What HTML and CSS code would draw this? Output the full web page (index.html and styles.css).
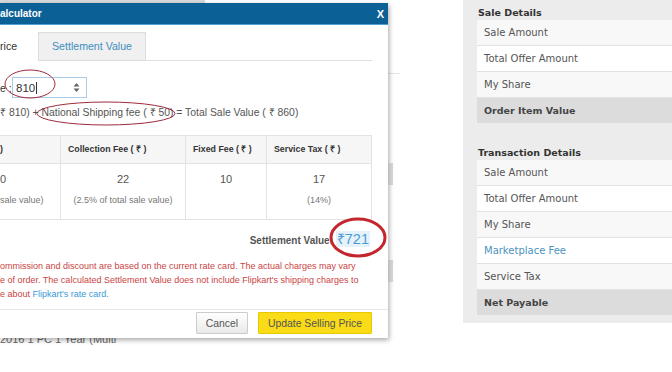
FILE: index.html
```html
<!DOCTYPE html>
<html>
<head>
    <meta charset="UTF-8">
    <title>Settlement Value Calculator</title>
    <link rel="stylesheet" href="styles.css">
</head>
<body>
    <div class="screen">
        <div class="page">
            <!-- the listing page behind the popup -->
            <div class="under-top"></div>
            <div class="under-line"></div>
            <div class="under-knob"></div>
            <div class="under-knob second"></div>
            <div class="under-row">2016 1 PC 1 Year (Multi</div>

            <div class="modal">
                <div class="modal-head">
                    <span>alculator</span>
                    <span class="close">X</span>
                </div>
                <div class="modal-body">
                    <div class="tabs">
                        <div class="tab tab-on">rice</div>
                        <div class="tab tab-off">Settlement Value</div>
                        <div class="tab-rest"></div>
                    </div>

                    <div class="price-row">
                        <span class="price-label">e :</span>
                        <div class="num">
                            <span>810</span><span class="caret"></span>
                            <svg class="spin" width="7" height="11" viewBox="0 0 7 11">
                                <path d="M0.5 4.5 L3.5 1 L6.5 4.5 Z M0.5 6.5 L3.5 10 L6.5 6.5 Z" fill="#666"/>
                            </svg>
                        </div>
                    </div>

                    <div class="formula">₹ 810) + National Shipping fee ( ₹ 50) = Total Sale Value ( ₹ 860)</div>

                    <div class="fees">
                        <div class="fees-head first">)</div>
                        <div class="fees-head">Collection Fee ( ₹ )</div>
                        <div class="fees-head">Fixed Fee ( ₹ )</div>
                        <div class="fees-head">Service Tax ( ₹ )</div>

                        <div class="fees-cell first">
                            <div class="fee-value">0</div>
                            <div class="fee-note">sale value)</div>
                        </div>
                        <div class="fees-cell">
                            <div class="fee-value">22</div>
                            <div class="fee-note">(2.5% of total sale value)</div>
                        </div>
                        <div class="fees-cell">
                            <div class="fee-value">10</div>
                        </div>
                        <div class="fees-cell">
                            <div class="fee-value">17</div>
                            <div class="fee-note">(14%)</div>
                        </div>
                    </div>

                    <div class="settlement">
                        Settlement Value: <span class="settle-amount">₹721</span>
                    </div>

                    <div class="note">
                        <div>ommission and discount are based on the current rate card. The actual charges may vary</div>
                        <div>e of order. The calculated Settlement Value does not include Flipkart's shipping charges to</div>
                        <div>e about <a href="#" class="note-link">Flipkart's rate card.</a></div>
                    </div>
                </div>
                <div class="modal-foot">
                    <button class="btn btn-cancel">Cancel</button>
                    <button class="btn btn-update">Update Selling Price</button>
                </div>

                <!-- hand drawn marks over the screenshot -->
                <svg class="marks" width="388" height="335" viewBox="0 0 388 335">
                    <ellipse cx="30" cy="81" rx="25" ry="14" fill="none" stroke="#9e2b3b" stroke-width="1"/>
                    <ellipse cx="106" cy="110.5" rx="69" ry="11.5" fill="none" stroke="#9e2b3b" stroke-width="1"/>
                    <ellipse cx="358" cy="234.5" rx="27" ry="18.5" fill="none" stroke="#c4262e" stroke-width="3"/>
                </svg>
            </div>
        </div>

        <div class="panel">
            <div class="section">
                <h3>Sale Details</h3>
                <div class="row">Sale Amount</div>
                <div class="row alt">Total Offer Amount</div>
                <div class="row">My Share</div>
                <div class="row total">Order Item Value</div>
            </div>
            <div class="section">
                <h3>Transaction Details</h3>
                <div class="row">Sale Amount</div>
                <div class="row alt">Total Offer Amount</div>
                <div class="row">My Share</div>
                <div class="row alt link">Marketplace Fee</div>
                <div class="row">Service Tax</div>
                <div class="row total">Net Payable</div>
            </div>
        </div>
    </div>
</body>
</html>
```

FILE: styles.css
```css
body {
    margin: 0;
    width: 672px;
    height: 372px;
    overflow: hidden;
    background: #fff;
    font-family: "Liberation Sans", Arial, sans-serif;
    color: #555;
}

.screen {
    display: flex;
    height: 372px;
}

.page {
    width: 463px;
    flex-shrink: 0;
    position: relative;
    overflow: hidden;
}

/* page behind the popup */
.under-top {
    width: 205px;
    height: 3px;
    background: #d9d9d9;
}

.under-line {
    margin-top: 70px;
    width: 400px;
    height: 1px;
    background: #e4e4e4;
}

.under-knob {
    margin: 89px 0 0 388px;
    width: 5px;
    height: 22px;
    background: linear-gradient(to right, #f0f0f0, #d6d6d6);
}

.under-knob.second {
    margin-top: 75px;
}

.under-row {
    margin-top: 51px;
    font-size: 11px;
    line-height: 13px;
    color: #666;
}

/* popup */
.modal {
    position: absolute;
    top: 3px;
    left: 0;
    width: 388px;
    height: 335px;
    background: #fff;
    box-shadow: 1px 2px 5px rgba(0, 0, 0, 0.35);
}

.modal-head {
    height: 21px;
    background: #0b6196;
    border-bottom: 1px solid #4e9fd2;
    display: flex;
    align-items: center;
    justify-content: space-between;
    padding-right: 4px;
    color: #fff;
    font-weight: bold;
    font-size: 10px;
}

.close {
    font-size: 11px;
}

.modal-body {
    padding-right: 16px;
}

.tabs {
    display: flex;
    margin-top: 7px;
    font-size: 10.6px;
}

.tab {
    height: 29px;
    line-height: 29px;
    box-sizing: border-box;
}

.tab-on {
    width: 38px;
    color: #333;
}

.tab-off {
    width: 108px;
    background: #f0f0f0;
    border: 1px solid #dcdcdc;
    line-height: 27px;
    text-align: center;
    color: #3d8ec0;
}

.tab-rest {
    flex: 1;
    border-bottom: 1px solid #e0e0e0;
}

.price-row {
    display: flex;
    align-items: center;
    margin-top: 16px;
    font-size: 10.5px;
    color: #333;
}

.price-label {
    width: 12px;
}

.num {
    width: 75px;
    height: 21px;
    box-sizing: border-box;
    border: 1px solid #a8cbe8;
    display: flex;
    align-items: center;
    padding-left: 3px;
    font-size: 11.5px;
    color: #333;
}

.caret {
    width: 1px;
    height: 12px;
    margin-left: 1px;
    background: #333;
}

.spin {
    margin-left: auto;
    margin-right: 6px;
}

.formula {
    margin-top: 8px;
    line-height: 14px;
    font-size: 10.4px;
    white-space: nowrap;
}

.fees {
    margin-top: 15px;
    display: grid;
    grid-template-columns: 61px 125px 81px 105px;
    border-top: 1px solid #e3e3e3;
    border-bottom: 1px solid #e3e3e3;
}

.fees-head {
    height: 27px;
    line-height: 27px;
    padding-left: 7px;
    background: #f6f6f6;
    border-right: 1px solid #e3e3e3;
    border-bottom: 1px solid #e3e3e3;
    font-size: 8.8px;
    font-weight: bold;
    color: #333;
    white-space: nowrap;
}

.fees-cell {
    height: 55px;
    padding-top: 8px;
    box-sizing: border-box;
    border-right: 1px solid #e3e3e3;
    text-align: center;
}

.fees-head.first,
.fees-cell.first {
    padding-left: 0;
    text-align: left;
}

.fee-value {
    font-size: 11px;
    line-height: 14px;
    color: #555;
}

.fee-note {
    margin-top: 8px;
    font-size: 9px;
    line-height: 12px;
    color: #777;
    white-space: nowrap;
}

.settlement {
    margin-top: 9px;
    line-height: 20px;
    text-align: right;
    padding-right: 2px;
    font-size: 10px;
    font-weight: bold;
    color: #555;
}

.settle-amount {
    font-size: 14.5px;
    font-weight: normal;
    color: #4a9bd3;
    background: #e6f2fa;
    padding: 0 1px;
}

.note {
    margin-top: 8px;
    font-size: 9px;
    line-height: 14px;
    color: #c94444;
    white-space: nowrap;
}

.note-link {
    color: #3a9ad9;
    text-decoration: none;
}

.modal-foot {
    margin-top: 8px;
    border-top: 1px solid #e8e8e8;
    padding: 2px 16px 0 0;
    display: flex;
    justify-content: flex-end;
    gap: 10px;
}

.btn {
    height: 22px;
    padding: 0;
    font-family: "Liberation Sans", Arial, sans-serif;
    font-size: 10.4px;
    color: #555;
    border-radius: 1px;
}

.btn-cancel {
    width: 52px;
    background: linear-gradient(#ffffff, #e9e9e9);
    border: 1px solid #cccccc;
}

.btn-update {
    width: 114px;
    background: #f9db17;
    border: 1px solid #e7c900;
}

.marks {
    position: absolute;
    top: 0;
    left: 0;
    pointer-events: none;
}

/* right panel */
.panel {
    flex: 1;
    height: 323px;
    box-sizing: border-box;
    padding: 5px 0 0 14px;
    background: #ececec;
    font-family: "DejaVu Sans", Verdana, sans-serif;
}

.section + .section {
    margin-top: 22px;
}

.panel h3 {
    margin: 0;
    padding-left: 1px;
    font-size: 9.5px;
    line-height: 15px;
    color: #333;
}

.row {
    height: 25px;
    line-height: 25px;
    padding-left: 7px;
    border-bottom: 1px solid #e2e2e2;
    background: #f8f8f8;
    font-size: 10px;
    color: #555;
    white-space: nowrap;
}

.row.alt {
    background: #fff;
}

.row.link {
    color: #4c92bd;
}

.row.total {
    border-bottom: 0;
    background: #dcdcdc;
    font-size: 9.5px;
    font-weight: bold;
    color: #444;
}
```
